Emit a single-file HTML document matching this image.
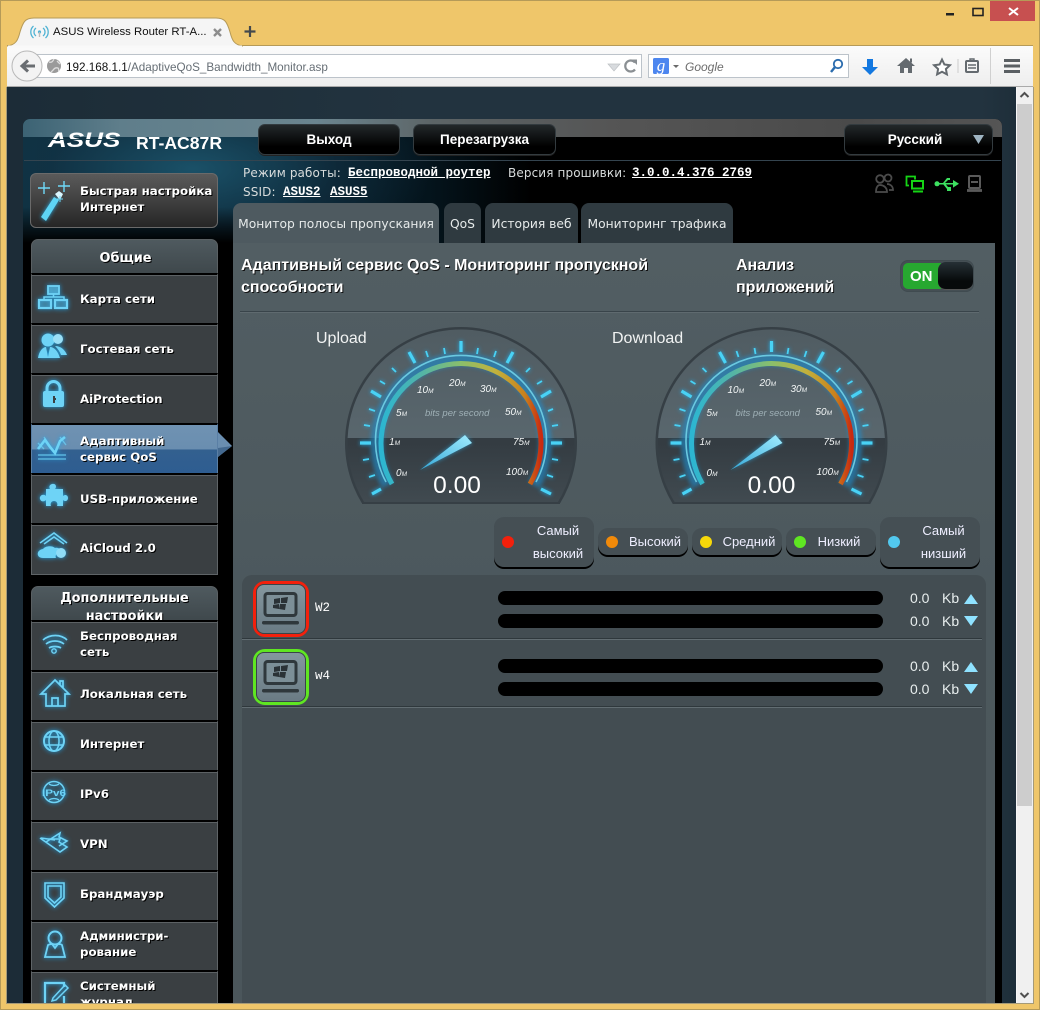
<!DOCTYPE html>
<html lang="ru"><head><meta charset="utf-8"><title>ASUS Wireless Router RT-AC87R</title>
<style>
*{box-sizing:border-box}
html,body{margin:0;padding:0;width:1040px;height:1010px;overflow:hidden;background:#efc66a;font-family:"Liberation Sans",sans-serif}
.a{position:absolute}
#page{position:absolute;left:7px;top:87px;width:1026px;height:916px;overflow:hidden;background:linear-gradient(90deg,#1c2c37,#22333f 40%,#22333f 95%,#1c2c37)}
#page>*{position:absolute}
.btn{top:37px;height:31px;border-radius:7px;border:1px solid #333b3f;background:linear-gradient(#23282a,#000 75%);color:#fff;font:bold 13.5px/30px "Liberation Sans",sans-serif;text-align:center;box-shadow:0 1px 0 #222}
.st{font:12px/16px "DejaVu Sans",sans-serif;color:#d8dcdc;letter-spacing:.12px;white-space:nowrap}
.m{font:bold 12.5px/16px "Liberation Mono",monospace;color:#fff;text-decoration:underline;white-space:nowrap}
.tab{top:116px;height:41px;border-radius:8px 8px 0 0;background:#2f3a40;color:#e6eaea;font:12.3px/42px "DejaVu Sans",sans-serif;text-align:center;white-space:nowrap}
.hd{left:24px;width:187px;background:linear-gradient(#4f5a5f,#3f484c);border:1px solid #5a6063;border-radius:7px 7px 0 0;color:#fff;font:bold 12.9px/17px "DejaVu Sans",sans-serif;text-align:center;text-shadow:1px 1px 0 #000;overflow:hidden}
.it{left:24px;width:187px;height:50px;background:#3a3f42;border-top:2px solid #000;border-left:1px solid #5f6467;border-right:1px solid #5f6467;box-shadow:inset 0 1px 0 #5c6164;color:#fff;font:bold 11.8px/16px "DejaVu Sans",sans-serif;text-shadow:1px 1px 0 #000;display:flex;align-items:center;padding-left:48px}
.ad{padding-bottom:4px}
.lg{background:#454f54;border-radius:10px;box-shadow:0 2px 0 #000;color:#eef;font:13px/27px "Liberation Sans",sans-serif;text-align:center}
.dot{width:12px;height:12px;border-radius:50%}
.bar{left:491px;width:385px;height:14px;background:#000;border-radius:7px}
.v{color:#e8eeee;font:14px/16px "Liberation Sans",sans-serif}
.dev{left:246px;width:56px;height:56px;border-radius:12px;border:3px solid;background:#3f494e}
.dev i{position:absolute;left:0;top:0;right:0;bottom:0;border-radius:8px;background:linear-gradient(#84979f,#6a7b84);border:1px solid #3a4348}
.sep{left:235px;width:740px;height:2px;background:#626d72;border-top:1px solid #2f383c}
</style></head><body>

<!-- browser chrome -->
<div class="a" style="left:0;top:0;width:1040px;height:1010px;border:1px solid #b59a58"></div>
<div class="a" style="left:990px;top:1px;width:45px;height:20px;background:#c75050"></div>
<svg class="a" style="left:0;top:0" width="1040" height="46">
<rect x="946" y="13" width="8" height="2.5" fill="#222"/>
<rect x="973" y="8.500" width="10" height="7" fill="none" stroke="#222" stroke-width="1.600"/>
<path d="M1009 8l9 7M1018 8l-9 7" stroke="#fff" stroke-width="2"/>
</svg>
<div class="a" style="left:7px;top:45px;width:1026px;height:42px;background:linear-gradient(#fbfbfb,#eeeeee);border-top:1px solid #b59a58;border-bottom:1px solid #aaa"></div>
<svg class="a" style="left:0;top:0" width="260" height="48">
<path d="M7 46C16 45 18 40 20 32 23 22 25 18 34 18H216C225 18 227 22 230 32 232 40 234 45 243 46Z" fill="#f5f5f5" stroke="#b59a58" stroke-width="1"/>
<rect x="8" y="45.500" width="234" height="3" fill="#f9f9f9"/>
<g fill="none" stroke="#4fb3d4" stroke-width="1.300"><path d="M36 28a5 5 0 0 0 0 8M43 28a5 5 0 0 1 0 8"/><path d="M33.500 26a8 8 0 0 0 0 12M45.500 26a8 8 0 0 1 0 12"/></g>
<circle cx="39.500" cy="32" r="1.600" fill="#4fb3d4"/><rect x="38.800" y="32" width="1.400" height="5" fill="#bbb"/>
<path d="M214 29l7 7M221 29l-7 7" stroke="#8d8d8d" stroke-width="2.400"/>
<path d="M250 26v11M244.500 31.500h11" stroke="#44494d" stroke-width="2.200"/>
</svg>
<div class="a" style="left:53px;top:24px;font:11.4px/16px 'Liberation Sans',sans-serif;color:#111;white-space:nowrap">ASUS Wireless Router RT-A...</div>
<div class="a" style="left:20px;top:54px;width:622px;height:24px;background:#fff;border:1px solid #bcc3ca"></div>
<div class="a" style="left:648px;top:54px;width:201px;height:24px;background:#fff;border:1px solid #bcc3ca"></div>
<svg class="a" style="left:0;top:46px" width="1033" height="40">
<circle cx="27" cy="20" r="15" fill="#f3f3f3" stroke="#b8b8b8"/>
<path d="M35 20H23M28 14.500l-6 5.500 6 5.500" fill="none" stroke="#696d71" stroke-width="3"/>
<circle cx="54" cy="20" r="7" fill="#9a9a9a"/><path d="M49 16c3 1 4-1 5-3M51 26c3-2 3-5 7-4 1 1 1 3 0 3M57 15l3 3" stroke="#ddd" stroke-width="1.300" fill="none"/>
<path d="M608 18h12l-6 7z" fill="#d8dbde" stroke="#bdc1c4" stroke-width=".7"/>
<path d="M635 16.500a5.500 5.500 0 1 0 0 7" fill="none" stroke="#8a8f93" stroke-width="2.200"/><path d="M631.500 13.500h5.500v5.500z" fill="#8a8f93"/>
<rect x="653" y="12" width="16" height="16" rx="1.500" fill="#4d86ef"/>
<text x="661" y="25" text-anchor="middle" font-family="Liberation Serif,serif" font-style="italic" font-size="17" fill="#fff">g</text>
<path d="M673 19h6l-3 3z" fill="#6a6a6a"/>
<circle cx="838" cy="18" r="4.200" fill="none" stroke="#2b6cae" stroke-width="1.800"/><path d="M835 21l-4 5" stroke="#2b6cae" stroke-width="2.400"/>
<path d="M867 13h6v8h5l-8 8-8-8h5z" fill="#1378e0"/>
<path d="M906 12l-9 8h3v7h4v-5h4v5h4v-7h3z" fill="#646a6f"/><rect x="910" y="12.500" width="2" height="4" fill="#646a6f"/>
<path d="M942 13.500l2.400 5 5.500.7-4 3.800 1 5.400-4.900-2.600-4.900 2.600 1-5.400-4-3.800 5.500-.7z" fill="#fff" stroke="#646a6f" stroke-width="2"/>
<rect x="957.500" y="13" width="1" height="14" fill="#ccc"/>
<rect x="966" y="15" width="12" height="11" rx="1" fill="none" stroke="#646a6f" stroke-width="2"/><path d="M968 19h8M968 22h8M970 15v-2h4v2" stroke="#646a6f" stroke-width="1.400" fill="none"/>
<rect x="990" y="2" width="1" height="36" fill="#d0d0d0"/>
<path d="M1004 14.500h16M1004 20h16M1004 25.500h16" stroke="#5a5f63" stroke-width="3"/>
</svg>
<div class="a" style="left:66px;top:60px;font:11.7px/15px 'Liberation Sans',sans-serif;color:#111;white-space:nowrap">192.168.1.1<span style="color:#666e75">/AdaptiveQoS_Bandwidth_Monitor.asp</span></div>
<div class="a" style="left:685px;top:60px;font:italic 12px/14px 'Liberation Sans',sans-serif;color:#6d6d6d">Google</div>

<div id="page">
 <!-- main router frame -->
 <div style="left:16px;top:32px;width:979px;height:900px;background:#000;border-radius:7px 7px 0 0"></div>
 <div style="left:16px;top:32px;width:979px;height:124px;border-radius:7px 7px 0 0;background:radial-gradient(ellipse 240px 100px at 170px 50px,rgba(30,90,115,.8),rgba(20,50,70,.5) 60%,rgba(0,0,0,0) 100%),linear-gradient(90deg,#0e3242,#0a2836 25%,#04131b 42%,#000 52%)"></div>
 <div style="left:16px;top:120px;width:210px;height:36px;background:linear-gradient(rgba(0,0,0,0),#000)"></div>
 <div style="left:16px;top:32px;width:979px;height:18px;border-radius:7px 7px 0 0;background:linear-gradient(90deg,#3c6374,#5f7e8b 10%,#6b858f 30%,#5c6466 42%,#555 60%,#4a4a4a 85%,#555)"></div>
 <div style="left:17px;top:73px;width:977px;height:1px;background:#34444f"></div>

 <div style="left:41px;top:42px;font:italic bold 21px/24px 'Liberation Sans',sans-serif;color:#fff;transform:scaleX(1.24);transform-origin:left">ASUS</div>
 <div style="left:41px;top:52px;width:72px;height:1px;background:rgba(20,55,70,.9)"></div>
 <div style="left:129px;top:44px;font:bold 17.6px/24px 'Liberation Sans',sans-serif;color:#fff;white-space:nowrap">RT-AC87R</div>
 <div class="btn" style="left:251px;width:142px">Выход</div>
 <div class="btn" style="left:406px;width:143px">Перезагрузка</div>
 <div class="btn" style="left:837px;width:149px;padding-right:7px">Русский</div>
 <svg style="left:965px;top:47px" width="14" height="12"><path d="M1 1h11l-5.500 9z" fill="#9fb4c2"/></svg>

 <div class="st" style="left:236px;top:78px">Режим работы:</div>
 <div class="m" style="left:341px;top:78px">Беспроводной роутер</div>
 <div class="st" style="left:501px;top:78px">Версия прошивки:</div>
 <div class="m" style="left:625px;top:78px">3.0.0.4.376_2769</div>
 <div class="st" style="left:236px;top:97px">SSID:</div>
 <div class="m" style="left:276px;top:97px">ASUS2</div>
 <div class="m" style="left:323px;top:97px">ASUS5</div>

 <svg style="left:860px;top:82px" width="125" height="28">
  <g fill="none" stroke="#4b4b4b" stroke-width="1.800"><circle cx="13" cy="10" r="3.800"/><circle cx="21" cy="9" r="3.500"/><path d="M9 23c0-5 2-7 4-7 3 0 7 2 7 7zM20 15c3 0 6 2 6 6h-4"/></g>
  <g fill="none" stroke="#15d515" stroke-width="1.800"><path d="M42 16.500h-2.500V7.500H48v3"/><rect x="45" y="12" width="11" height="7.500" stroke-width="2"/><path d="M46 22.500h10" stroke-width="2"/></g>
  <g fill="#3de060" stroke="none"><path d="M69 14h20v1.500H69z"/><circle cx="70" cy="14.800" r="2.500"/><path d="M86 11l6 3.800-6 3.800z"/><path d="M76 14l4-5h3v2h-2l-4 4z"/><path d="M76 15l4 5h3v-2h-2l-3-3.500z"/><rect x="80" y="18" width="4" height="4"/></g>
  <g fill="none" stroke="#5a5a5a" stroke-width="2"><rect x="102" y="7" width="11" height="12" rx="1"/><path d="M104 13h7"/><path d="M100 21.500h15" stroke-width="2.800"/></g>
 </svg>

 <!-- quick setup -->
 <div style="left:23px;top:86px;width:188px;height:55px;border-radius:6px;border:1px solid #6a6a6a;background:linear-gradient(#5a5a5a,#262626)"></div>
 <svg style="left:30px;top:90px" width="40" height="48">
  <path d="M4 40L17 20l5 3L9 44z" fill="#5ed4f5" style="filter:drop-shadow(0 0 2px #29a9e0)"/><path d="M18 17l4-3 4 3-3 6z" fill="#d8f6ff"/>
  <path d="M7 5v12M1 11h12M27 4v11M21 9h12" stroke="#6fd8f7" stroke-width="1.400" fill="none"/><path d="M23 19v6M20 22h6" stroke="#6fd8f7" stroke-width="1"/>
 </svg>
 <div style="left:73px;top:96px;color:#fff;font:bold 11.8px/16px 'DejaVu Sans',sans-serif;text-shadow:1px 1px 0 #000;white-space:nowrap">Быстрая настройка<br>Интернет</div>

 <!-- sidebar -->
 <div class="hd" style="top:152px;height:35px;line-height:36px;padding-left:2px;padding-top:1px">Общие</div>
 <div class="it" style="top:186px">Карта сети</div>
 <div class="it" style="top:236px">Гостевая сеть</div>
 <div class="it" style="top:286px">AiProtection</div>
 <div class="it" style="top:336px;background:linear-gradient(#6f92b2 0,#6a8eb0 50%,#33608f 52%,#2e5d91 100%);box-shadow:none;border-left-color:#5a7fa5;border-right-color:#5a7fa5">Адаптивный<br>сервис QoS</div>
 <svg style="left:211px;top:339px" width="15" height="42"><path d="M0 6L14 20 0 31z" fill="#6a8eb0"/><path d="M0 22 14 20 0 31z" fill="#44698f"/></svg>
 <div class="it" style="top:386px">USB-приложение</div>
 <div class="it" style="top:436px;height:52px;border-bottom:1px solid #5f6467;padding-bottom:3px">AiCloud 2.0</div>

 <div class="hd" style="top:499px;height:36px;line-height:18px;padding-top:3px">Дополнительные настройки</div>
 <div class="it ad" style="top:533px">Беспроводная<br>сеть</div>
 <div class="it ad" style="top:583px">Локальная сеть</div>
 <div class="it ad" style="top:633px">Интернет</div>
 <div class="it ad" style="top:683px">IPv6</div>
 <div class="it ad" style="top:733px">VPN</div>
 <div class="it ad" style="top:783px">Брандмауэр</div>
 <div class="it ad" style="top:833px">Администри-<br>рование</div>
 <div class="it ad" style="top:883px">Системный<br>журнал</div>

 <!-- sidebar icons (page offset -7,-87) -->
 <svg style="left:0;top:0;filter:drop-shadow(0 0 2.500px #1fa8ee)" width="240" height="916" fill="none" stroke="#6ed3f6" stroke-width="1.800">
  <g transform="translate(-7,-87)">
   <rect x="48" y="286" width="11" height="8" fill="#6ed3f6" fill-opacity=".45"/><path d="M53.500 294v3M44 300v-3h20v3" stroke-width="1.500"/><rect x="39" y="300" width="12" height="8" stroke-width="2.200" fill="#6ed3f6" fill-opacity=".25"/><rect x="55" y="300" width="12" height="8" stroke-width="2.200" fill="#6ed3f6" fill-opacity=".25"/>
   <g stroke="none" fill="#6ed3f6"><circle cx="48" cy="340" r="6.500"/><circle cx="58" cy="339" r="5" fill="#9adff6"/><path d="M38 358c1-7 5-11 8-11l2 10 2-10c4 0 8 4 10 11z"/><path d="M55 346c6 0 10 4 12 9h-6c-1-3-3-6-6-9z"/></g>
   <path d="M47 391v-3a6.500 6.500 0 0 1 13 0v3" stroke-width="3"/><rect x="43" y="391" width="21" height="16" rx="2" fill="#6ed3f6" stroke="none"/><path d="M54 396v7M54 399h2" stroke="#3a3f42" stroke-width="2"/>
   <path d="M38 449l7-9 5 7 5 6 5-12 5-4" stroke-width="2.600"/><path d="M38 443l6 6M38 455h28M38 459h28M44 437l8 12M60 437l6 8" stroke-width="1.400" stroke-opacity=".7"/>
   <path stroke="none" fill="#6ed3f6" d="M46 489h4c-1-2-1-4 2-5 4-1 5 3 3 5h8v7c2-2 5-1 5 2s-3 4-5 2v6h-6c1-2 0-5-3-5s-4 3-3 5h-5v-6c-2 2-5 2-6-1s3-6 6-3z"/>
   <path d="M40 543l14-10 13 10M44 544l10-7 10 7" stroke-width="1.600"/><path stroke="none" fill="#6ed3f6" d="M43 558c-7 0-7-8 0-9 2-3 9-4 12-1 4-1 6 2 5 4-4 1-5 4-4 6z"/><circle cx="61" cy="553" r="5" fill="#8fdcf6" stroke="none"/>

   <path d="M43 640c7-6 18-6 24 0M46 644c5-4 13-4 18 0M49 648c3-2 9-2 12 0" stroke-width="1.700"/><circle cx="54" cy="651" r="2.200" stroke-width="1.400"/>
   <path d="M41 694l14-14 14 14h-4v12H46v-12zM52 706v-8h6v8M60 685v-4h3v7" stroke-width="1.700"/>
   <circle cx="54" cy="741" r="10" stroke-width="2"/><ellipse cx="54" cy="741" rx="5" ry="10" stroke-width="1.500"/><path d="M44 737h20M44 745h20" stroke-width="1.500"/>
   <circle cx="54" cy="792" r="10.500" stroke-width="1.500"/><path d="M49 784c3 2 7 2 10 0M49 800c3-2 7-2 10 0" stroke-width="1.300"/>
   <path d="M40 838l20 14 7-5-8-5 1-3-12 0M46 842l14-9-1 4 8 4-8 5M41 838l14 2" stroke-width="1.600"/>
   <path d="M45 883h19v15l-9.500 9-9.500-9zM48 886h13v11l-6.500 6-6.500-6z" stroke-width="1.600"/>
   <circle cx="55" cy="938" r="6.500" stroke-width="2"/><path d="M45 957l3-12c2-1 4-1 4-1l3 4 3-4s3 0 4 1l3 12z" stroke-width="1.800"/>
   <path d="M64 987v-4H45v22h19v-9" stroke-width="2.200"/><path d="M53 998l12-13 3 3-12 12-4 1z" stroke-width="1.500"/>
  </g>
 </svg>
 <svg style="left:34px;top:698px" width="38" height="14"><text x="1" y="11" font-family="Liberation Sans,sans-serif" font-weight="bold" font-size="9.500" fill="#6ed3f6" textLength="24" lengthAdjust="spacingAndGlyphs" style="filter:drop-shadow(0 0 2px #1fa8ee)">IPv6</text></svg>

 <!-- tabs -->
 <div class="tab" style="left:226px;width:206px;background:#4e5a60">Монитор полосы пропускания</div>
 <div class="tab" style="left:437px;width:37px">QoS</div>
 <div class="tab" style="left:478px;width:93px">История веб</div>
 <div class="tab" style="left:574px;width:152px">Мониторинг трафика</div>

 <!-- panel -->
 <div style="left:226px;top:156px;width:762px;height:790px;background:linear-gradient(#525e63,#4c585d 45%,#4b565b)"></div>
 <div style="left:234px;top:168px;width:440px;color:#fff;font:bold 16px/22px 'Liberation Sans',sans-serif;text-shadow:1px 1px 0 #111">Адаптивный сервис QoS - Мониторинг пропускной способности</div>
 <div style="left:729px;top:168px;width:120px;color:#fff;font:bold 16px/22px 'Liberation Sans',sans-serif;text-shadow:1px 1px 0 #111">Анализ приложений</div>
 <div style="left:893px;top:173px;width:74px;height:32px;border-radius:8px;border:1px solid #404b50;background:#454f54"></div>
 <div style="left:896px;top:176px;width:38px;height:26px;border-radius:5px 0 0 5px;background:#27a830;color:#fff;font:bold 15px/28px 'Liberation Sans',sans-serif;padding-left:7px">ON</div>
 <div style="left:931px;top:175px;width:35px;height:28px;border-radius:8px;background:linear-gradient(#263035,#070a0b 70%);border-bottom:1px solid #555"></div>
 <div style="left:233px;top:224px;width:739px;height:2px;background:#5f6a6f;border-top:1px solid #39444a"></div>
 <div style="left:309px;top:242px;color:#f1f3f3;font:16px/20px 'Liberation Sans',sans-serif">Upload</div>
 <div style="left:605px;top:242px;color:#f1f3f3;font:16px/20px 'Liberation Sans',sans-serif">Download</div>

 <!-- gauges -->
 <svg style="left:226px;top:233px" width="762" height="190" viewBox="233 320 762 190">
  <defs>
   <linearGradient id="gb" x1="0" y1="0" x2="0" y2="1"><stop offset="0" stop-color="#505c62"/><stop offset="1" stop-color="#63727a"/></linearGradient>
   <linearGradient id="gl" x1="0" y1="0" x2="0" y2="1"><stop offset="0" stop-color="#363e44"/><stop offset=".5" stop-color="#343c42"/><stop offset="1" stop-color="#4c575d"/></linearGradient>
   <linearGradient id="ar" x1="0" y1="0" x2="1" y2="0"><stop offset="0" stop-color="#2cb6d2"/><stop offset=".25" stop-color="#52b4a8"/><stop offset=".5" stop-color="#8abf6b"/><stop offset=".72" stop-color="#c2b13c"/><stop offset=".9" stop-color="#c9801c"/><stop offset="1" stop-color="#c92a10"/></linearGradient>
   <linearGradient id="nd" x1="0" y1="1" x2="1" y2="0"><stop offset="0" stop-color="#34a8d8"/><stop offset="1" stop-color="#a0ecff"/></linearGradient>
   <clipPath id="cb"><rect x="233" y="320" width="762" height="183"/></clipPath>
   <clipPath id="cu"><rect x="233" y="320" width="762" height="118"/></clipPath>
   <clipPath id="cl"><rect x="233" y="438" width="762" height="66"/></clipPath>
   <filter id="gw" x="-30%" y="-30%" width="160%" height="160%"><feGaussianBlur stdDeviation="2.200"/></filter>
  </defs>
  <g>
   <g clip-path="url(#cb)">
    <circle cx="461" cy="443" r="116" fill="#363f45"/>
    <circle cx="461" cy="443" r="113.500" fill="url(#gb)" clip-path="url(#cu)"/>
    <circle cx="461" cy="443" r="113.500" fill="url(#gl)" clip-path="url(#cl)"/>
   </g>
   <path d="M362 503h198" stroke="#363f45" stroke-width="2"/>
   <path d="M388 485A84 84 0 1 1 534 485" fill="none" stroke="#1e8ecf" stroke-width="13" opacity=".6" filter="url(#gw)"/>
   <path d="M392 484A80 80 0 1 1 530 484" fill="none" stroke="url(#ar)" stroke-width="5"/>
   <path d="M386 482A85.500 85.500 0 1 1 536 482" fill="none" stroke="#6bc9e0" stroke-width="1.600"/>
   <g stroke="#49d2f5" style="filter:drop-shadow(0 0 2px #1fb0ee)">
    <path stroke-width="3.200" d="M381 489L372 494M371 443H360M381 397L371 391M415 363L409 352M461 352V341M507 363L513 352M541 397L551 391M551 443H562M541 489L551 494"/>
    <path stroke-width="1.800" d="M369 459L363 460M370 426L364 425M375 411L369 409M385 384L380 381M396 372L392 368M428 357L426 351M445 354L444 348M477 354L478 348M494 357L496 351M526 372L530 368M537 384L542 381M548 411L553 409M552 426L558 425M552 459L558 460M547 475L553 477M375 475L369 477"/>
   </g>
   <g font-family="Liberation Sans,sans-serif" font-style="italic" fill="#f2f5f5">
    <text x="396" y="476" font-size="10">0<tspan font-size="6.500">M</tspan></text>
    <text x="389" y="445" font-size="10">1<tspan font-size="6.500">M</tspan></text>
    <text x="396" y="416" font-size="10">5<tspan font-size="6.500">M</tspan></text>
    <text x="417" y="393" font-size="10">10<tspan font-size="6.500">M</tspan></text>
    <text x="449" y="386" font-size="10">20<tspan font-size="6.500">M</tspan></text>
    <text x="480" y="392" font-size="10">30<tspan font-size="6.500">M</tspan></text>
    <text x="505" y="415" font-size="10">50<tspan font-size="6.500">M</tspan></text>
    <text x="513" y="445" font-size="10">75<tspan font-size="6.500">M</tspan></text>
    <text x="506" y="475" font-size="10">100<tspan font-size="6.500">M</tspan></text>
    <text x="425" y="416" font-size="9.500" fill="#9fb0b6">bits per second</text>
   </g>
   <path d="M420 470L465 435 472 443Z" fill="#2ea9e0" filter="url(#gw)" opacity=".7"/>
   <path d="M420 470L465 435 472 443Z" fill="url(#nd)"/>
   <text x="457" y="493" text-anchor="middle" font-family="Liberation Sans,sans-serif" font-size="24.500" fill="#fff">0.00</text>
  </g>
  <g transform="translate(310.500,0)">
   <g clip-path="url(#cb)">
    <circle cx="461" cy="443" r="116" fill="#363f45"/>
    <circle cx="461" cy="443" r="113.500" fill="url(#gb)" clip-path="url(#cu)"/>
    <circle cx="461" cy="443" r="113.500" fill="url(#gl)" clip-path="url(#cl)"/>
   </g>
   <path d="M362 503h198" stroke="#363f45" stroke-width="2"/>
   <path d="M388 485A84 84 0 1 1 534 485" fill="none" stroke="#1e8ecf" stroke-width="13" opacity=".6" filter="url(#gw)"/>
   <path d="M392 484A80 80 0 1 1 530 484" fill="none" stroke="url(#ar)" stroke-width="5"/>
   <path d="M386 482A85.500 85.500 0 1 1 536 482" fill="none" stroke="#6bc9e0" stroke-width="1.600"/>
   <g stroke="#49d2f5" style="filter:drop-shadow(0 0 2px #1fb0ee)">
    <path stroke-width="3.200" d="M381 489L372 494M371 443H360M381 397L371 391M415 363L409 352M461 352V341M507 363L513 352M541 397L551 391M551 443H562M541 489L551 494"/>
    <path stroke-width="1.800" d="M369 459L363 460M370 426L364 425M375 411L369 409M385 384L380 381M396 372L392 368M428 357L426 351M445 354L444 348M477 354L478 348M494 357L496 351M526 372L530 368M537 384L542 381M548 411L553 409M552 426L558 425M552 459L558 460M547 475L553 477M375 475L369 477"/>
   </g>
   <g font-family="Liberation Sans,sans-serif" font-style="italic" fill="#f2f5f5">
    <text x="396" y="476" font-size="10">0<tspan font-size="6.500">M</tspan></text>
    <text x="389" y="445" font-size="10">1<tspan font-size="6.500">M</tspan></text>
    <text x="396" y="416" font-size="10">5<tspan font-size="6.500">M</tspan></text>
    <text x="417" y="393" font-size="10">10<tspan font-size="6.500">M</tspan></text>
    <text x="449" y="386" font-size="10">20<tspan font-size="6.500">M</tspan></text>
    <text x="480" y="392" font-size="10">30<tspan font-size="6.500">M</tspan></text>
    <text x="505" y="415" font-size="10">50<tspan font-size="6.500">M</tspan></text>
    <text x="513" y="445" font-size="10">75<tspan font-size="6.500">M</tspan></text>
    <text x="506" y="475" font-size="10">100<tspan font-size="6.500">M</tspan></text>
    <text x="425" y="416" font-size="9.500" fill="#9fb0b6">bits per second</text>
   </g>
   <path d="M420 470L465 435 472 443Z" fill="#2ea9e0" filter="url(#gw)" opacity=".7"/>
   <path d="M420 470L465 435 472 443Z" fill="url(#nd)"/>
   <text x="461" y="493" text-anchor="middle" font-family="Liberation Sans,sans-serif" font-size="24.500" fill="#fff">0.00</text>
  </g>
 </svg>

 <!-- legend -->
 <div class="lg" style="left:487px;top:430px;width:100px;height:50px;padding-left:28px;line-height:22.500px;padding-top:3px">Самый<br>высокий</div>
 <div class="dot" style="left:495px;top:449px;background:#f3200c"></div>
 <div class="lg" style="left:591px;top:441px;width:90px;height:27px;padding-left:24px">Высокий</div>
 <div class="dot" style="left:599px;top:449px;background:#f18a0a"></div>
 <div class="lg" style="left:685px;top:441px;width:90px;height:27px;padding-left:24px">Средний</div>
 <div class="dot" style="left:693px;top:449px;background:#f6d80a"></div>
 <div class="lg" style="left:779px;top:441px;width:90px;height:27px;padding-left:16px">Низкий</div>
 <div class="dot" style="left:787px;top:449px;background:#5fe622"></div>
 <div class="lg" style="left:873px;top:430px;width:100px;height:50px;padding-left:27px;line-height:22.500px;padding-top:3px">Самый<br>низший</div>
 <div class="dot" style="left:881px;top:449px;background:#52c8ee"></div>

 <!-- list -->
 <div style="left:235px;top:488px;width:744px;height:440px;background:#434d52;border-radius:10px 10px 0 0"></div>
 <div class="dev" style="top:494px;border-color:#f3200c"><i></i></div>
 <div class="dev" style="top:562px;border-color:#5fe622"><i></i></div>
 <svg style="left:246px;top:494px" width="56" height="124" fill="none">
  <rect x="12" y="12.500" width="31" height="22" rx="2.500" fill="#7c8f97" stroke="#2f383c" stroke-width="3"/>
  <path d="M21 18l6-1v5l-6 1zM28 17l7-1-1 6-6 0zM20 24l6-1v5l-6-1zM27 23l6 0-1 6-6-1z" fill="#2a3236"/><rect x="9" y="40" width="37" height="3.500" rx="1.700" fill="#2f383c"/>
  <g transform="translate(0,68)"><rect x="12" y="12.500" width="31" height="22" rx="2.500" fill="#7c8f97" stroke="#2f383c" stroke-width="3"/>
  <path d="M21 18l6-1v5l-6 1zM28 17l7-1-1 6-6 0zM20 24l6-1v5l-6-1zM27 23l6 0-1 6-6-1z" fill="#2a3236"/><rect x="9" y="40" width="37" height="3.500" rx="1.700" fill="#2f383c"/></g>
 </svg>
 <div style="left:308px;top:514px;font:12.5px/14px 'Liberation Mono',monospace;color:#fff">W2</div>
 <div style="left:308px;top:582px;font:12.5px/14px 'Liberation Mono',monospace;color:#fff">w4</div>
 <div class="bar" style="top:504px"></div><div class="bar" style="top:527px"></div>
 <div class="bar" style="top:572px"></div><div class="bar" style="top:595px"></div>
 <div class="sep" style="top:551px"></div><div class="sep" style="top:619px"></div>
 <div class="v" style="left:903px;top:503px">0.0</div><div class="v" style="left:935px;top:503px">Kb</div>
 <div class="v" style="left:903px;top:526px">0.0</div><div class="v" style="left:935px;top:526px">Kb</div>
 <div class="v" style="left:903px;top:571px">0.0</div><div class="v" style="left:935px;top:571px">Kb</div>
 <div class="v" style="left:903px;top:594px">0.0</div><div class="v" style="left:935px;top:594px">Kb</div>
 <svg style="left:957px;top:505px" width="15" height="104" fill="#8fe2ff">
  <path d="M0 12h14L7 2z"/><path d="M0 24h14l-7 10z"/><path d="M0 80h14L7 70z"/><path d="M0 92h14l-7 10z"/>
 </svg>

 <!-- scrollbar -->
 <div style="left:1009px;top:0;width:17px;height:916px;background:#f0f0f0;border-left:1px solid #f7f7f7"></div>
 <div style="left:1010px;top:17px;width:15px;height:702px;background:#cdcdcd"></div>
 <svg style="left:1009px;top:0" width="17" height="916"><path d="M4.500 10l4-4 4 4" fill="none" stroke="#505050" stroke-width="2"/><path d="M4.500 906l4 4 4-4" fill="none" stroke="#505050" stroke-width="2"/></svg>
</div>
<div class="a" style="left:6px;top:87px;width:1px;height:917px;background:#a59a78"></div>
<div class="a" style="left:1033px;top:87px;width:1px;height:917px;background:#a59a78"></div>
<div class="a" style="left:6px;top:1003px;width:1028px;height:1px;background:#a59a78"></div>
</body></html>
